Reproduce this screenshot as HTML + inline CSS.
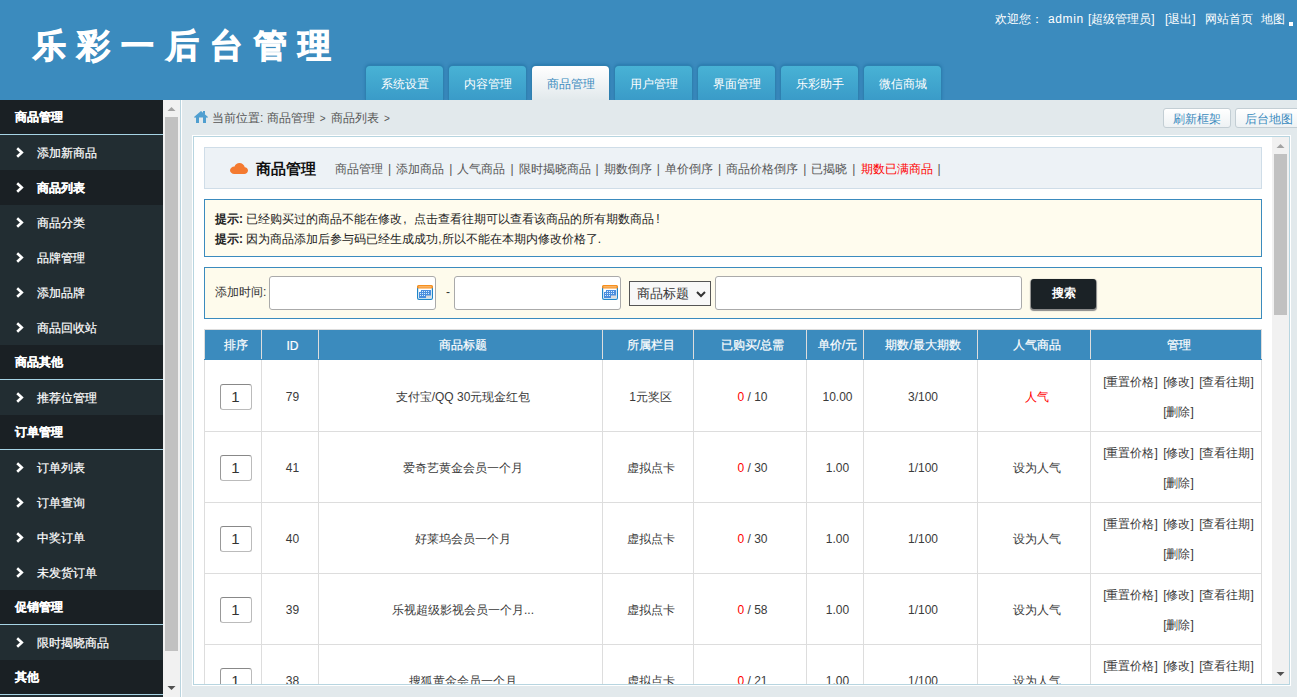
<!DOCTYPE html>
<html><head><meta charset="utf-8">
<style>
*{margin:0;padding:0;box-sizing:border-box}
html,body{width:1297px;height:697px;overflow:hidden;font-family:"Liberation Sans",sans-serif;font-size:12px;color:#555;background:#e2e9ec}
.abs{position:absolute}
#hd{left:0;top:0;width:1297px;height:100px;background:#3b8bbe}
#logo{left:33px;top:22.5px;font-size:33px;font-weight:bold;-webkit-text-stroke:1px #fff;color:#fff;letter-spacing:11.2px;line-height:46px;white-space:nowrap}
#welcome{left:995px;top:11px;color:#fff;font-size:12px;line-height:16px;white-space:nowrap}
#welcome span{position:absolute;top:0}
#sq{left:1289px;top:22px;width:4px;height:4px;background:#fff}
.tab{top:66px;width:77px;height:34px;border-radius:4px 4px 0 0;background:linear-gradient(#48b2d5,#3a9bc8);color:#fff;font-size:12px;text-align:center;line-height:34px;padding-top:1px;box-shadow:0 0 0 1px #2f80b0,0 -1px 3px 1px rgba(20,100,150,.45);clip-path:inset(-5px -5px 0 -5px)}
.tab.on{background:linear-gradient(#fff,#e2e9ec);color:#3b8bbe}
#side{left:0;top:100px;width:163px;height:597px;background:#222d32}
.sh{position:absolute;left:0;width:163px;height:35px;background:#1a2024;border-bottom:1px solid #a6d3e4;color:#fff;font-weight:bold;padding-left:15px;line-height:34px;-webkit-text-stroke:0.2px #fff}
.si{position:absolute;left:0;width:163px;height:35px;color:#fff;padding-left:37px;line-height:35px;padding-top:1px;-webkit-text-stroke:0.2px #fff}
.si.on{background:#1a2024;font-weight:bold}
.chev{position:absolute;left:16px;top:12px;width:8px;height:11px}
#sbar{left:163px;top:100px;width:17px;height:597px;background:#f1f1f1}
#mainl{left:180px;top:100px;width:1px;height:597px;background:#b9d4df}
#mainl2{left:181px;top:100px;width:1px;height:597px;background:#fff}
#crumb{left:212px;top:110px;line-height:16px;color:#555;white-space:nowrap}
.btn{top:108px;height:20px;border:1px solid #c3ced4;border-radius:3px;background:linear-gradient(#fff,#eef2f4);color:#3b8bbe;text-align:center;line-height:20px}
#box{left:192px;top:135px;width:1099px;height:551px;border:1px solid #fff;background:#fff}
#boxin{left:0;top:0;width:1097px;height:549px;border:1px solid #b7d5e0;overflow:hidden;background:#fff}
#ibar{left:1078px;top:0;width:17px;height:547px;background:#f1f1f1}
#panel{left:10px;top:10px;width:1058px;height:42px;background:#edf2f6;border:1px solid #cfdde8}
#tips{left:10px;top:62px;width:1058px;height:58px;background:#fffcee;border:1px solid #3b8bbe}
#search{left:10px;top:130px;width:1058px;height:52px;background:#fefbec;border:1px solid #3b8bbe}
table{position:absolute;left:10px;top:192px;width:1058px;border-collapse:collapse;table-layout:fixed}
th{background:#3b8bbe;color:#fff;height:30px;font-weight:normal;-webkit-text-stroke:0.2px #fff;padding:2px 0 0 5px;border:1px solid #ddd;border-bottom:1px solid #3b8bbe;font-size:12px}
tr.r1 td{height:72px;padding-top:3px}
td{height:71px;border:1px solid #ddd;text-align:center;color:#3a3a3a;font-size:12px;padding:2px 0 0 5px}
.red{color:#f00}
.ord{display:inline-block;vertical-align:middle;width:32px;height:26px;border:1px solid #bbb;border-top-color:#888;border-left-color:#999;border-radius:3px;font-size:15px;line-height:24px;color:#333;text-align:center}
.gt{display:inline-block;width:16.2px;text-align:center;font-size:10px;vertical-align:top;position:relative;top:1px}
.mg{line-height:30px;word-spacing:2px}
#panel i{font-style:normal;display:inline-block;width:13.2px;text-align:center}
.inp{border:1px solid #aaa;border-radius:3px;background:#fff}
.cal{position:absolute;right:2px;top:8px}
</style></head><body>
<div id="hd" class="abs"></div>
<div id="logo" class="abs">乐彩一后台管理</div>
<div id="welcome" class="abs" style="width:300px;height:16px"><span style="left:0">欢迎您：</span><span style="left:53px;letter-spacing:0.6px">admin</span><span style="left:93px">[超级管理员]</span><span style="left:170px">[退出]</span><span style="left:210px">网站首页</span><span style="left:266px">地图</span></div>
<div id="sq" class="abs"></div>
<div class="abs tab" style="left:366px">系统设置</div>
<div class="abs tab" style="left:449px">内容管理</div>
<div class="abs tab on" style="left:532px">商品管理</div>
<div class="abs tab" style="left:615px">用户管理</div>
<div class="abs tab" style="left:698px">界面管理</div>
<div class="abs tab" style="left:781px">乐彩助手</div>
<div class="abs tab" style="left:864px">微信商城</div>

<div id="side" class="abs">
<div class="sh" style="top:0px">商品管理</div>
<div class="si" style="top:35px"><svg class="chev" viewBox="0 0 8 11"><path d="M1.2 1.2L5.8 5.5L1.2 9.8" fill="none" stroke="#fff" stroke-width="2.6" stroke-linejoin="miter"/></svg>添加新商品</div>
<div class="si on" style="top:70px"><svg class="chev" viewBox="0 0 8 11"><path d="M1.2 1.2L5.8 5.5L1.2 9.8" fill="none" stroke="#fff" stroke-width="2.6" stroke-linejoin="miter"/></svg>商品列表</div>
<div class="si" style="top:105px"><svg class="chev" viewBox="0 0 8 11"><path d="M1.2 1.2L5.8 5.5L1.2 9.8" fill="none" stroke="#fff" stroke-width="2.6" stroke-linejoin="miter"/></svg>商品分类</div>
<div class="si" style="top:140px"><svg class="chev" viewBox="0 0 8 11"><path d="M1.2 1.2L5.8 5.5L1.2 9.8" fill="none" stroke="#fff" stroke-width="2.6" stroke-linejoin="miter"/></svg>品牌管理</div>
<div class="si" style="top:175px"><svg class="chev" viewBox="0 0 8 11"><path d="M1.2 1.2L5.8 5.5L1.2 9.8" fill="none" stroke="#fff" stroke-width="2.6" stroke-linejoin="miter"/></svg>添加品牌</div>
<div class="si" style="top:210px"><svg class="chev" viewBox="0 0 8 11"><path d="M1.2 1.2L5.8 5.5L1.2 9.8" fill="none" stroke="#fff" stroke-width="2.6" stroke-linejoin="miter"/></svg>商品回收站</div>
<div class="sh" style="top:245px">商品其他</div>
<div class="si" style="top:280px"><svg class="chev" viewBox="0 0 8 11"><path d="M1.2 1.2L5.8 5.5L1.2 9.8" fill="none" stroke="#fff" stroke-width="2.6" stroke-linejoin="miter"/></svg>推荐位管理</div>
<div class="sh" style="top:315px">订单管理</div>
<div class="si" style="top:350px"><svg class="chev" viewBox="0 0 8 11"><path d="M1.2 1.2L5.8 5.5L1.2 9.8" fill="none" stroke="#fff" stroke-width="2.6" stroke-linejoin="miter"/></svg>订单列表</div>
<div class="si" style="top:385px"><svg class="chev" viewBox="0 0 8 11"><path d="M1.2 1.2L5.8 5.5L1.2 9.8" fill="none" stroke="#fff" stroke-width="2.6" stroke-linejoin="miter"/></svg>订单查询</div>
<div class="si" style="top:420px"><svg class="chev" viewBox="0 0 8 11"><path d="M1.2 1.2L5.8 5.5L1.2 9.8" fill="none" stroke="#fff" stroke-width="2.6" stroke-linejoin="miter"/></svg>中奖订单</div>
<div class="si" style="top:455px"><svg class="chev" viewBox="0 0 8 11"><path d="M1.2 1.2L5.8 5.5L1.2 9.8" fill="none" stroke="#fff" stroke-width="2.6" stroke-linejoin="miter"/></svg>未发货订单</div>
<div class="sh" style="top:490px">促销管理</div>
<div class="si" style="top:525px"><svg class="chev" viewBox="0 0 8 11"><path d="M1.2 1.2L5.8 5.5L1.2 9.8" fill="none" stroke="#fff" stroke-width="2.6" stroke-linejoin="miter"/></svg>限时揭晓商品</div>
<div class="sh" style="top:560px">其他</div>
</div>
<div id="sbar" class="abs"><svg class="abs" style="left:4px;top:6px" width="9" height="6"><path d="M0.5 5L4.5 1L8.5 5Z" fill="#a3a3a3"/></svg><div class="abs" style="left:2px;top:17px;width:13px;height:534px;background:#c1c1c1"></div><svg class="abs" style="left:4px;top:585px" width="9" height="6"><path d="M0.5 1L4.5 5L8.5 1Z" fill="#505050"/></svg></div>
<div id="mainl" class="abs"></div>
<div id="mainl2" class="abs"></div>
<svg class="abs" style="left:194px;top:111px" width="14" height="12" viewBox="0 0 14 12"><path d="M7 0L0 6L1 7L2 6.3V12H5V6.6H9V12H12V6.3L13 7L14 6Z M9 0H11V3.5L9 1.8Z" fill="#4f9fd0"/></svg><div id="crumb" class="abs">当前位置: 商品管理<span class="gt">&gt;</span>商品列表<span class="gt">&gt;</span></div>
<div class="abs btn" style="left:1163px;width:68px">刷新框架</div>
<div class="abs btn" style="left:1235px;width:67px">后台地图</div>

<div id="box" class="abs"><div id="boxin" class="abs">
<div id="panel" class="abs"><svg class="abs" style="left:25px;top:15px" width="18" height="11" viewBox="0 0 19 12" preserveAspectRatio="none"><path d="M4.5 12H15C17.2 12 19 10.4 19 8.3C19 6.3 17.5 4.8 15.6 4.6C15 2 12.7 0 10 0C7.6 0 5.5 1.6 4.8 3.8C2.1 3.9 0 5.8 0 8C0 10.2 2 12 4.5 12Z" fill="#f47a30"/></svg><div class="abs" style="left:51px;top:11px;font-size:14.6px;font-weight:bold;color:#111;line-height:20px">商品管理</div><div class="abs" style="left:130px;top:13px;line-height:16px;color:#555;white-space:nowrap">商品管理<i>|</i>添加商品<i>|</i>人气商品<i>|</i>限时揭晓商品<i>|</i>期数倒序<i>|</i>单价倒序<i>|</i>商品价格倒序<i>|</i>已揭晓<i>|</i><span class="red">期数已满商品</span><i>|</i></div></div>
<div id="tips" class="abs"><div class="abs" style="left:10px;top:9px;line-height:20px;color:#222"><b>提示:</b> 已经购买过的商品不能在修改<span style="display:inline-block;width:12px;padding-left:1px">,</span>点击查看往期可以查看该商品的所有期数商品<span style="margin-left:2px">!</span><br><b>提示:</b> 因为商品添加后参与码已经生成成功,所以不能在本期内修改价格了.</div></div>
<div id="search" class="abs"><div class="abs" style="left:10px;top:16px;line-height:16px;color:#333">添加时间:</div>
<div class="abs inp" style="left:64px;top:8px;width:167px;height:34px"><svg class="cal" width="16" height="15" viewBox="0 0 16 15"><rect x="0.6" y="1" width="14.8" height="13.4" rx="1.5" fill="#fff" stroke="#1f86c8" stroke-width="1.2"/><rect x="0" y="0" width="16" height="3.6" rx="1.5" fill="#f7901e"/><rect x="1.5" y="1.5" width="13" height="0.8" fill="#fcd7ad"/><rect x="2" y="5" width="12" height="8" fill="#4b8ede"/><rect x="2" y="5" width="2" height="2" fill="#fff"/><rect x="9" y="10.5" width="5" height="2.5" fill="#dcdcdc"/><g fill="#d8f0ff"><rect x="3" y="6" width="1" height="1"/><rect x="5" y="6" width="1" height="1"/><rect x="7" y="6" width="1" height="1"/><rect x="9" y="6" width="1" height="1"/><rect x="11" y="6" width="1" height="1"/><rect x="3" y="8" width="1" height="1"/><rect x="5" y="8" width="1" height="1"/><rect x="7" y="8" width="1" height="1"/><rect x="9" y="8" width="1" height="1"/><rect x="11" y="8" width="1" height="1"/><rect x="3" y="10" width="1" height="1"/><rect x="5" y="10" width="1" height="1"/><rect x="7" y="10" width="1" height="1"/></g></svg></div>
<div class="abs" style="left:241px;top:16px;line-height:16px;color:#333">-</div>
<div class="abs inp" style="left:249px;top:8px;width:167px;height:34px"><svg class="cal" width="16" height="15" viewBox="0 0 16 15"><rect x="0.6" y="1" width="14.8" height="13.4" rx="1.5" fill="#fff" stroke="#1f86c8" stroke-width="1.2"/><rect x="0" y="0" width="16" height="3.6" rx="1.5" fill="#f7901e"/><rect x="1.5" y="1.5" width="13" height="0.8" fill="#fcd7ad"/><rect x="2" y="5" width="12" height="8" fill="#4b8ede"/><rect x="2" y="5" width="2" height="2" fill="#fff"/><rect x="9" y="10.5" width="5" height="2.5" fill="#dcdcdc"/><g fill="#d8f0ff"><rect x="3" y="6" width="1" height="1"/><rect x="5" y="6" width="1" height="1"/><rect x="7" y="6" width="1" height="1"/><rect x="9" y="6" width="1" height="1"/><rect x="11" y="6" width="1" height="1"/><rect x="3" y="8" width="1" height="1"/><rect x="5" y="8" width="1" height="1"/><rect x="7" y="8" width="1" height="1"/><rect x="9" y="8" width="1" height="1"/><rect x="11" y="8" width="1" height="1"/><rect x="3" y="10" width="1" height="1"/><rect x="5" y="10" width="1" height="1"/><rect x="7" y="10" width="1" height="1"/></g></svg></div>
<div class="abs" style="left:424px;top:13px;width:82px;height:25px;border:1px solid #555;background:#f8f8f8;font-size:13px;line-height:23px;color:#333;padding-left:7px">商品标题<svg class="abs" style="left:66px;top:9px" width="10" height="7"><path d="M1 1L5 5L9 1" fill="none" stroke="#333" stroke-width="2"/></svg></div>
<div class="abs inp" style="left:510px;top:8px;width:307px;height:34px"></div>
<div class="abs" style="left:826px;top:11px;width:65px;height:30px;background:#1b2226;border-radius:3px;box-shadow:0 1px 1px 1px #8a8a8a;color:#fff;font-weight:bold;text-align:center;line-height:29px">搜索</div>
</div>
<table>
<colgroup><col style="width:57px"><col style="width:57px"><col style="width:284px"><col style="width:91px"><col style="width:113px"><col style="width:57px"><col style="width:114px"><col style="width:113px"><col style="width:171px"></colgroup>
<tr><th>排序</th><th>ID</th><th>商品标题</th><th>所属栏目</th><th>已购买/总需</th><th>单价/元</th><th>期数/最大期数</th><th>人气商品</th><th>管理</th></tr>
<tr class="r1"><td><span class="ord">1</span></td><td>79</td><td>支付宝/QQ 30元现金红包</td><td>1元奖区</td><td><span class="red">0</span> / 10</td><td>10.00</td><td>3/100</td><td><span class="red">人气</span></td><td class="mg">[重置价格] [修改] [查看往期]<br>[删除]</td></tr>
<tr><td><span class="ord">1</span></td><td>41</td><td>爱奇艺黄金会员一个月</td><td>虚拟点卡</td><td><span class="red">0</span> / 30</td><td>1.00</td><td>1/100</td><td>设为人气</td><td class="mg">[重置价格] [修改] [查看往期]<br>[删除]</td></tr>
<tr><td><span class="ord">1</span></td><td>40</td><td>好莱坞会员一个月</td><td>虚拟点卡</td><td><span class="red">0</span> / 30</td><td>1.00</td><td>1/100</td><td>设为人气</td><td class="mg">[重置价格] [修改] [查看往期]<br>[删除]</td></tr>
<tr><td><span class="ord">1</span></td><td>39</td><td>乐视超级影视会员一个月...</td><td>虚拟点卡</td><td><span class="red">0</span> / 58</td><td>1.00</td><td>1/100</td><td>设为人气</td><td class="mg">[重置价格] [修改] [查看往期]<br>[删除]</td></tr>
<tr><td><span class="ord">1</span></td><td>38</td><td>搜狐黄金会员一个月</td><td>虚拟点卡</td><td><span class="red">0</span> / 21</td><td>1.00</td><td>1/100</td><td>设为人气</td><td class="mg">[重置价格] [修改] [查看往期]<br>[删除]</td></tr>
</table>
<div id="ibar" class="abs"><svg class="abs" style="left:4px;top:6px" width="9" height="6"><path d="M0.5 5L4.5 1L8.5 5Z" fill="#a3a3a3"/></svg><div class="abs" style="left:2px;top:17px;width:13px;height:161px;background:#c1c1c1"></div><svg class="abs" style="left:4px;top:534px" width="9" height="6"><path d="M0.5 1L4.5 5L8.5 1Z" fill="#505050"/></svg></div>
</div></div>
</body></html>
